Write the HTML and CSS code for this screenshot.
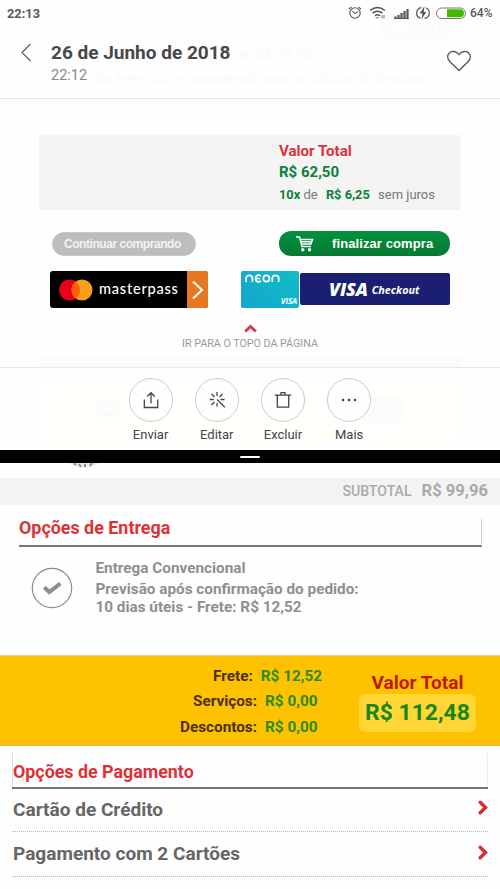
FILE: index.html
```
<!DOCTYPE html>
<html lang="pt-BR">
<head>
<meta charset="utf-8">
<title>26 de Junho de 2018</title>
<link rel="stylesheet" href="styles.css">
</head>
<body>
<header class="top">
  <div class="ghost-pill">ok <span>❯</span></div>
  <div class="ghost-line ghost-a">de R$ 49,98</div>
  <div class="ghost-line ghost-b">do frete não é considerado para o cálculo do desconto</div>
  <div class="status">
    <span class="clock">22:13</span>
    <svg class="status-icons" width="118" height="20" viewBox="0 0 118 20" fill="none" stroke="#555">
      <g stroke-width="1.1"><circle cx="7" cy="10" r="5.2"/><path d="M4.3 8.2 7 10.6l2.800-2M1 6l2.600-2.200M13 6l-2.600-2.200"/></g>
      <g stroke-width="1.500"><path d="M22 7.500q7.500-6 15 0M24.500 10.200q5-4 10 0M27 12.800q2.500-2 5 0"/></g>
      <path d="M28 14.200h3l-1.500 1.500z" fill="#555" stroke="none"/><path d="M34 12v3.500M36 12v3.500" stroke-width=".8"/>
      <path d="M47.500 13.500v2.500M50.500 12v4M53.500 10v6M56.500 8v8M59.500 6v10" stroke-width="2.200"/>
      <path d="M46 15.400h14.500" stroke-width="1"/>
      <path d="M73.500 4.600a5.500 5.500 0 0 0-1 10.700M76.500 15.400a5.500 5.500 0 0 0 1-10.700" stroke-width="1.200"/>
      <path d="M76.300 3.500l-4.500 7h2.700l-1 6 4.700-7.500h-2.500z" fill="#555" stroke="none"/>
      <rect x="88.500" y="5" width="29" height="10.500" rx="5.250" stroke="#777" stroke-width="1"/>
      <path d="M99 6.200h13a4 4 0 0 1 0 8h-13z" fill="#42b900" stroke="none"/>
    </svg>
    <span class="percent">64%</span>
  </div>
  <div class="titlebar">
    <svg class="back" width="12" height="20" viewBox="0 0 12 20" fill="none" stroke="#666" stroke-width="1.300"><path d="M10.500 1 2 9.500l8.500 8.500"/></svg>
    <div class="titles"><h1><span>26 de Junho de 2018</span></h1><p>22:12</p></div>
    <svg class="heart" width="26" height="24" viewBox="0 0 26 24" fill="none" stroke="#555" stroke-width="1.300"><path d="M13 21.500 4.200 13C.8 9.600 1.200 6 3 4.200c2.600-2.600 7-2.400 10 1.400 3-3.800 7.400-4 10-1.400 1.800 1.800 2.200 5.400-1.200 8.800z"/></svg>
  </div>
</header>

<main class="shop">
  <section class="summary">
    <p class="total-label">Valor Total</p>
    <p class="total-value">R$ 62,50</p>
    <p class="installments"><b>10x</b> <span>de</span> <b class="part">R$ 6,25</b> <span class="nojuros">sem juros</span></p>
  </section>
  <section class="buttons">
    <div class="pill gray"><span>Continuar comprando</span></div>
    <div class="pill green">
      <svg width="18" height="16" viewBox="0 0 18 16" fill="none" stroke="#fff" stroke-width="1.500"><path d="M0 1h3.500l2.500 9.500h9M4.200 3.500h12.300l-1.500 4.500H5.500M5 5.700h10"/><circle cx="6.800" cy="13.700" r="1" fill="#fff"/><circle cx="13.500" cy="13.700" r="1" fill="#fff"/></svg>
      <span>finalizar compra</span>
    </div>
  </section>
  <section class="wallets">
    <div class="masterpass">
      <svg width="34" height="22" viewBox="0 0 34 22"><circle cx="10.500" cy="11" r="10.500" fill="#ea001b"/><circle cx="23" cy="11" r="10.500" fill="#f79e1b"/><path d="M16.750 2.600a10.500 10.500 0 0 1 0 16.800a10.500 10.500 0 0 1 0-16.800" fill="#ff5f00"/></svg>
      <span>masterpass</span>
      <div class="go"><svg width="12" height="20" viewBox="0 0 12 20" fill="none" stroke="#fff" stroke-width="2"><path d="M1 1.500 10 10l-9 8.500"/></svg></div>
    </div>
    <div class="neon">
      <svg width="35" height="9" viewBox="0 0 35 9" fill="none" stroke="#fff" stroke-width="1.700"><path d="M1 8V4.500a3.200 3.200 0 0 1 6.400 0V8M16 2.200a3.300 3.300 0 1 0 0 4.600M11 4.500h4M18.300 4.500a3.100 3.100 0 1 0 6.200 0 3.100 3.100 0 1 0-6.200 0M27.300 8V4.500a3.200 3.200 0 0 1 6.400 0V8"/></svg>
      <span>VISA</span>
    </div>
    <div class="visa"><b>VISA</b><i>Checkout</i></div>
  </section>
  <a class="to-top"><svg width="13" height="9" viewBox="0 0 13 9" fill="none" stroke="#d13a50" stroke-width="3"><path d="M1.200 7.500 6.500 2.500l5.300 5"/></svg><span>IR PARA O TOPO DA PÁGINA</span></a>
  <div class="ghost-strip"></div>
</main>

<nav class="actions">
  <div class="ghost-band"><svg width="24" height="17" viewBox="0 0 24 17"><rect width="24" height="17" rx="1" fill="#fbfbf9"/><path d="m2 3 10 7 10-7" fill="none" stroke="#fff" stroke-width="2"/></svg><span>ok</span></div>
  <div class="action"><i><svg width="18" height="18" viewBox="0 0 18 18"><path d="M2.300 8.500v8h13.400v-8M9 12.500V2M5.200 5.500 9 1.700l3.800 3.800"/></svg></i><span>Enviar</span></div>
  <div class="action"><i><svg width="18" height="18" viewBox="0 0 18 18"><path d="M9 1v4M9 12v3.500M1.700 8.500h4M12.500 8.500h4M3.500 3l3 3M14.500 3l-3 3M3.500 14l3-3M9 8.500l7.800 7.700"/></svg></i><span>Editar</span></div>
  <div class="action"><i><svg width="18" height="18" viewBox="0 0 18 18"><path d="M.8 4.200h16.400M3.300 4.200v12h11.400v-12M7 4V1.700h4V4"/></svg></i><span>Excluir</span></div>
  <div class="action"><i><svg width="18" height="18" viewBox="0 0 18 18" class="dots"><circle cx="3" cy="9" r="1.300"/><circle cx="9" cy="9" r="1.300"/><circle cx="15" cy="9" r="1.300"/></svg></i><span>Mais</span></div>
</nav>

<div class="divider"><i></i></div>

<section class="cart">
  <svg class="cut" width="32" height="6" viewBox="0 0 32 6"><path d="M1 0q15 9 30 0z" fill="#e6e8ef"/><path d="M6 0l2 2M11 1l2 3M17 1v3M24 0l-2 3" stroke="#8b90a0" fill="none" stroke-width="2"/></svg>
  <div class="subtotal"><span>SUBTOTAL</span><b>R$ 99,96</b></div>
  <h2 class="delivery-title"><span>Opções de Entrega</span></h2>
  <div class="delivery">
    <svg width="42" height="42" viewBox="0 0 42 42" fill="none" stroke="#8d8d8d"><circle cx="21" cy="21" r="19.700" stroke-width="1.200"/><path d="m13.300 20.300 5 4.700 11-8.500" stroke-width="4"/></svg>
    <div><p class="d1">Entrega Convencional</p><p class="d2">Previsão após confirmação do pedido:</p><p class="d3">10 dias úteis - Frete: R$ 12,52</p></div>
  </div>
</section>

<section class="totals">
  <div class="lines">
    <p class="l1"><span>Frete:</span><b>R$ 12,52</b></p>
    <p class="l2"><span>Serviços:</span><b>R$ 0,00</b></p>
    <p class="l2"><span>Descontos:</span><b>R$ 0,00</b></p>
  </div>
  <div class="grand"><p>Valor Total</p><b>R$ 112,48</b></div>
</section>

<section class="payment">
  <h2><span>Opções de Pagamento</span></h2>
  <div class="pay"><span>Cartão de Crédito</span><svg width="10" height="15" viewBox="0 0 10 15" fill="none" stroke="#d92b30" stroke-width="3.400" stroke-linecap="round"><path d="m2.200 2.200 5.300 5.300-5.300 5.300"/></svg></div>
  <div class="pay"><span>Pagamento com 2 Cartões</span><svg width="10" height="15" viewBox="0 0 10 15" fill="none" stroke="#d92b30" stroke-width="3.400" stroke-linecap="round"><path d="m2.200 2.200 5.300 5.300-5.300 5.300"/></svg></div>
</section>
</body>
</html>
```
FILE: styles.css
```
* { box-sizing: border-box; }
body, h1, h2, p { margin: 0; }
body { width: 500px; height: 889px; overflow: hidden; background: #fefefe; font-family: Roboto, "Liberation Sans", sans-serif; color: #444; }
svg { display: block; flex: none; }
span, b, p { white-space: nowrap; }
b, h1, h2 { font-weight: 700; }

.top { position: relative; height: 99px; border-bottom: 1px solid #e6e6e6; }
.status { position: relative; display: flex; align-items: center; height: 26px; padding: 0 8px; font-size: 12.800px; font-weight: 700; color: #5a5a5a; }
.clock { margin-left: -1px; }
.status-icons { margin-left: auto; }
.percent { width: 22px; margin-left: 4px; font-size: 12px; font-weight: 500; }
.titlebar { position: relative; display: flex; padding: 15px 28px 0 20px; }
.back { margin: 2px 19px 0 0; }
.titles { flex: 1; }
h1 { font-size: 19px; line-height: 24px; color: #484848; }
.titles p { margin-top: 2px; font-size: 14.500px; line-height: 18px; color: #888; }
.heart { margin-top: 8px; }
.ghost-pill { position: absolute; left: 380px; top: 14px; width: 70px; height: 26px; border-radius: 13px; background: #f9fcfb; color: #fff; font: 500 14px/24px Roboto, sans-serif; padding-left: 13px; }
.ghost-pill span { margin-left: 16px; }
.ghost-line { position: absolute; color: #f9f9f9; font-weight: 400; font-size: 12.500px; line-height: 16px; }
.ghost-a { left: 237px; top: 47px; letter-spacing: .8px; }
.ghost-b { left: 97px; top: 71px; letter-spacing: .6px; }

.shop { height: 268px; padding: 36px 39px 0; display: flex; flex-direction: column; }
.summary { height: 75px; padding: 6px 0 0 240px; background: #f4f4f4; }
.total-label { font-size: 15.100px; line-height: 20px; font-weight: 700; color: #dc3237; }
.total-value { font-size: 15px; line-height: 20px; margin-top: 1px; font-weight: 700; color: #0b8039; }
.installments { font-size: 13px; line-height: 20px; margin-top: 3px; color: #777; }
.installments b { color: #0b8039; font-size: 12.800px; }
.part { margin-left: 5px; }
.nojuros { margin-left: 5px; }
.buttons { display: flex; justify-content: space-between; height: 25px; margin: 21px 11px 0 13px; }
.pill { height: 24px; border-radius: 12px; color: #fff; font-family: "Liberation Sans", sans-serif; font-weight: 700; display: flex; align-items: center; }
.gray { width: 144px; margin-top: 1px; background: #bdbdbd; border: 1px solid #c8c8c8; padding-left: 11px; font-size: 12px; letter-spacing: -.45px; color: #f2f2f2; }
.green { width: 171px; height: 25px; background: linear-gradient(#00913d, #087832); padding-left: 17px; font-size: 13px; letter-spacing: .1px; }
.green span { margin-left: 18px; }
.wallets { display: flex; height: 37px; margin: 15px 11px 0; }
.masterpass { width: 158px; border-radius: 3px; background: #000; overflow: hidden; display: flex; align-items: center; padding-left: 9px; color: #fff; }
.masterpass span { font: 500 14.500px/20px Lato, sans-serif; letter-spacing: .8px; margin: -2px 0 0 6px; }
.go { width: 21px; height: 37px; margin-left: auto; background: #e87722; display: flex; align-items: center; justify-content: center; }
.neon { width: 58px; margin-left: 33px; border-radius: 2px; background: linear-gradient(45deg, #14a5cc, #12bdc6); padding: 3px 2px 0 4px; display: flex; flex-direction: column; color: #fff; }
.neon span { align-self: flex-end; margin-top: 13px; font: italic 700 8px/10px "Open Sans", sans-serif; letter-spacing: -.1px; }
.visa { width: 150px; height: 32px; margin: 2px 0 0 1px; border-radius: 2px; background: #1a1f71; color: #fff; display: flex; align-items: center; padding-left: 29px; }
.visa b { font: italic 800 18px/32px "Open Sans", sans-serif; letter-spacing: -.2px; }
.visa i { font: italic 700 10.800px/32px "Open Sans", sans-serif; margin-left: 4px; margin-top: 1px; }
.to-top { display: flex; flex-direction: column; align-items: center; margin-top: 16px; height: 33px; }
.to-top span { margin-top: 5px; font-size: 10.700px; line-height: 12px; color: #999; }
.ghost-strip { height: 10px; background: #fafafa; }

.actions { position: relative; height: 83px; border-top: 1px solid #e8e8e8; padding: 10px 0 0 117.500px; display: flex; }
.ghost-band { position: absolute; left: 39px; top: 14px; width: 422px; height: 60px; background: #fffffc; display: flex; justify-content: space-between; padding: 18px 57px 0; }
.ghost-band span { width: 44px; height: 27px; border-radius: 13px; background: #f9fcfb; color: #fff; padding-left: 17px; font: 500 14px/24px Roboto, sans-serif; margin-top: -3px; }
.action { position: relative; width: 66.200px; display: flex; flex-direction: column; align-items: center; }
.action i { width: 44px; height: 44px; border: 1px solid #ccc; border-radius: 50%; background: #fefefe; display: flex; align-items: center; justify-content: center; }
.action svg { fill: none; stroke: #444; stroke-width: 1.300; }
.action .dots { fill: #444; stroke: none; }
.action span { margin-top: 4px; font-size: 13px; line-height: 18px; color: #444; }

.divider { height: 13px; background: #000; display: flex; justify-content: center; padding-top: 6px; }
.divider i { width: 20px; height: 2px; border-radius: 1px; background: #fff; }

.cart { height: 192px; }
.cut { margin-left: 68px; }
.subtotal { display: flex; justify-content: flex-end; height: 27px; margin-top: 9px; padding-right: 12px; background: #f3f3f3; line-height: 26px; color: #aaa; font-weight: 500; }
.subtotal span { font-size: 14.100px; line-height: 27px; margin-right: 10px; }
.subtotal b { font-size: 16.600px; }
.delivery-title { margin: 14px 18px 0 19px; height: 28px; border-bottom: 2px solid #777; border-right: 1px solid #ccc; font-size: 17.900px; line-height: 18px; color: #dc3237; }
.delivery { display: flex; margin: 12px 0 0 31px; font-size: 15.300px; font-weight: 700; color: #8f8f8f; }
.delivery svg { margin-top: 8px; }
.delivery div { margin-left: 22.500px; }
.delivery p { line-height: 18px; }
.delivery .d2 { margin-top: 3px; }

.totals { height: 91px; background: #ffc200; border-top: 1px solid #e8cf80; border-bottom: 1px solid #d1b36c; display: flex; }
.lines { width: 322px; padding-top: 7.500px; font-size: 15.300px; font-weight: 700; }
.lines p { display: flex; justify-content: flex-end; gap: 8px; line-height: 25.500px; color: #4a3010; }
.lines b { color: #2a8c18; }
.lines .l2 { padding-right: 4.500px; }
.grand { margin-left: 37px; width: 117px; display: flex; flex-direction: column; align-items: center; padding-top: 15px; }
.grand p { font-size: 19.100px; line-height: 23px; font-weight: 700; color: #c01808; }
.grand b { width: 117px; height: 38px; border-radius: 6px; background: #ffd633; text-align: center; font-size: 22.900px; line-height: 37px; color: #178518; }

.payment { padding: 7px 12px 0; }
.payment h2 { height: 36px; border: solid #777; border-width: 0 0 2px; box-shadow: inset 1px 0 #ddd, inset -1px 0 #eee; padding-left: 1px; font-size: 17.850px; line-height: 38px; color: #dc3237; }
.pay { display: flex; justify-content: space-between; height: 43px; padding-left: 1px; border-bottom: 1px dotted #bbb; font-size: 19.050px; line-height: 42px; font-weight: 700; color: #666; }
.pay + .pay { height: 45px; line-height: 44px; }
.pay svg { margin-top: 11px; }
.pay + .pay svg { margin-top: 13px; }
```
